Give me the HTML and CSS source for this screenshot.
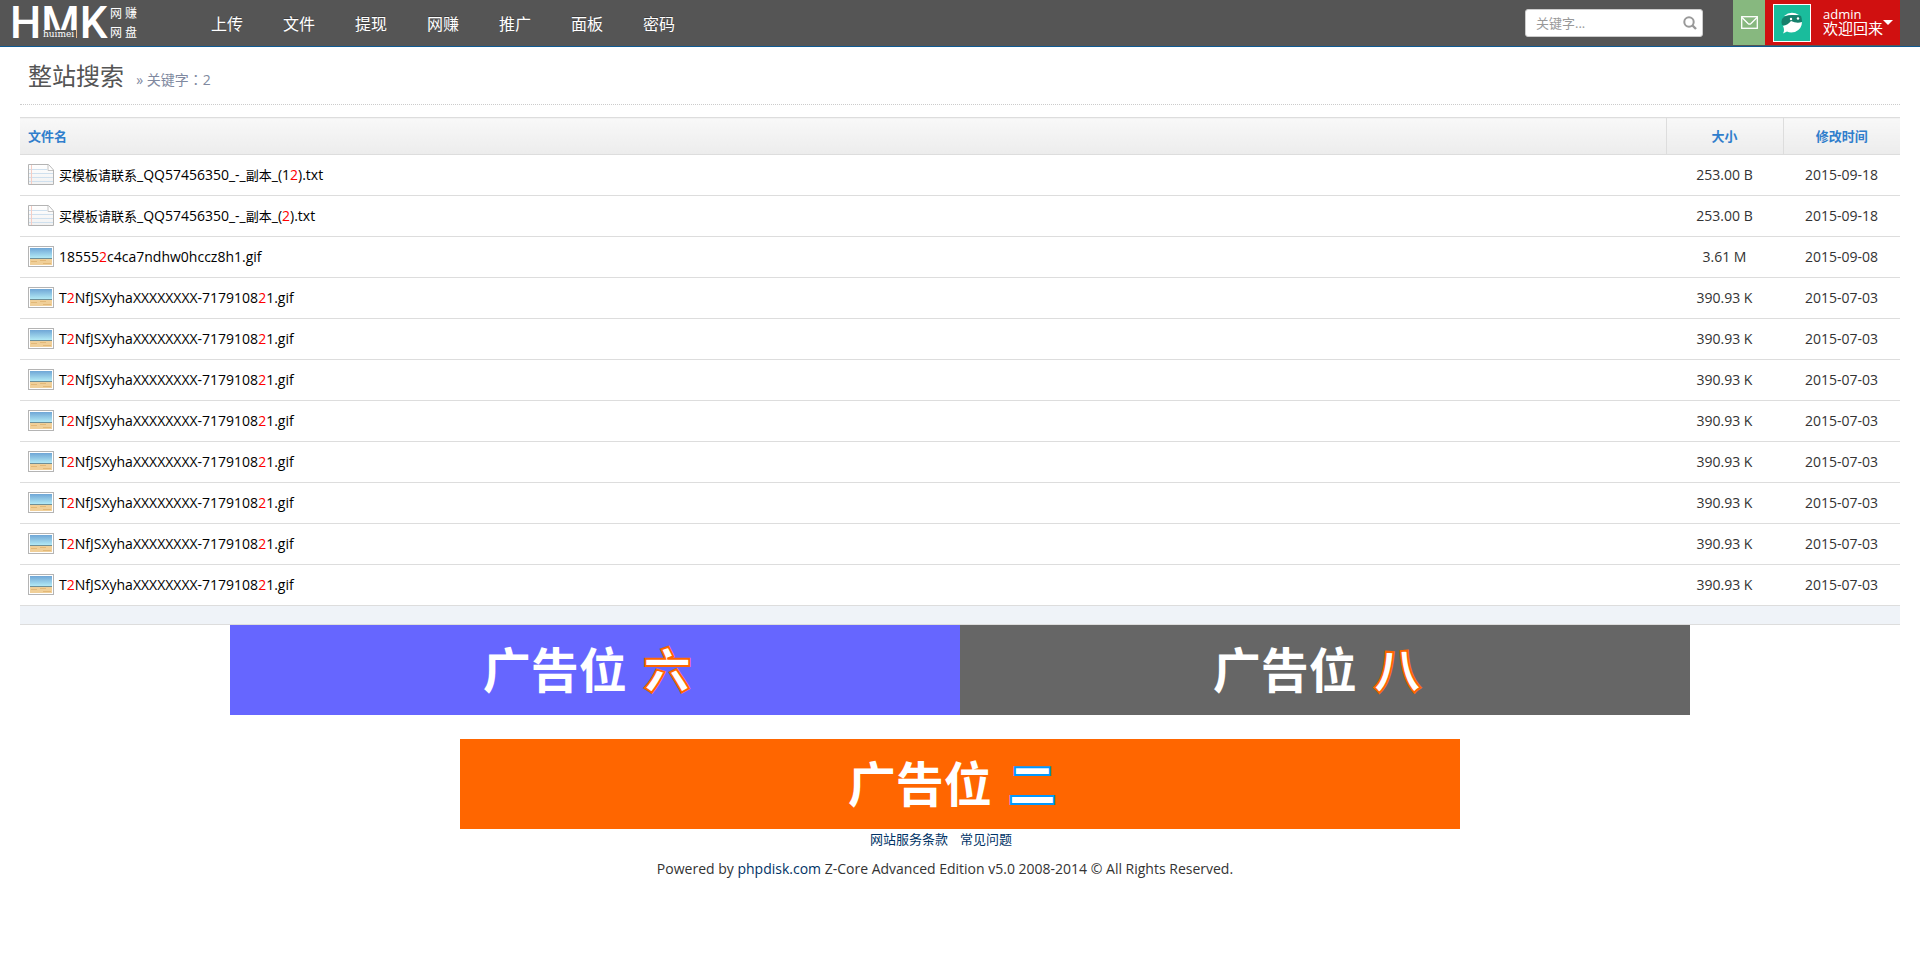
FILE: index.html
```html
<!DOCTYPE html>
<html lang="zh-CN">
    <head>
        <meta charset="UTF-8" />
        <meta name="viewport" content="width=device-width, initial-scale=1.0" />
        <title>整站搜索</title>
        <link rel="stylesheet" href="styles.css">
    </head>
    <body>
        <svg class="symbols" width="0" height="0" aria-hidden="true">
            <defs>
                <linearGradient id="sky" x1="0" y1="0" x2="0" y2="1">
                    <stop offset="0" stop-color="#6fa6d6" />
                    <stop offset="1" stop-color="#b9f0f8" />
                </linearGradient>
                <linearGradient id="paper" x1="0" y1="0" x2="0" y2="1">
                    <stop offset="0" stop-color="#fff" />
                    <stop offset="1" stop-color="#f1f1f1" />
                </linearGradient>
                <symbol id="icon-txt" viewBox="0 0 26 21">
                    <path d="M.5 .5H20.500L25.500 6V20.500H.5Z" fill="url(#paper)" stroke="#b4b4b4" />
                    <path d="M1 5.500H19M1 9.500H25M1 13.500H25M1 17.500H25" stroke="#cfe0ee" />
                    <path d="M3.500 1V20" stroke="#f5cdc4" />
                    <path d="M20 1V6.500H25" fill="#fff" stroke="#c4c4c4" />
                </symbol>
                <symbol id="icon-gif" viewBox="0 0 26 21">
                    <rect x=".5" y=".5" width="25" height="20" fill="#fff" stroke="#b4b4b4" />
                    <rect x="2" y="2" width="22" height="11" fill="url(#sky)" />
                    <rect x="2" y="12" width="22" height="1" fill="#6f8f96" />
                    <rect x="2" y="13" width="22" height="6" fill="#f0cf98" />
                    <path d="M3 15.500H9M12 14.500H18M15 17.500H23" stroke="#e2b878" />
                </symbol>
            </defs>
        </svg>

        <header class="header">
            <a class="logo" href="#">
                <span class="logo-main">HMK</span>
                <span class="logo-sub">huimei</span>
                <span class="logo-side"><span>网 赚</span><span>网 盘</span></span>
            </a>
            <nav class="nav">
                <a href="#">上传</a>
                <a href="#">文件</a>
                <a href="#">提现</a>
                <a href="#">网赚</a>
                <a href="#">推广</a>
                <a href="#">面板</a>
                <a href="#">密码</a>
            </nav>
            <form class="search">
                <input type="text" name="word" placeholder="关键字..." aria-label="关键字" />
                <button type="submit" aria-label="搜索">
                    <svg width="14" height="14" viewBox="0 0 14 14" fill="none" stroke="#999" stroke-width="2">
                        <circle cx="6" cy="6" r="4.700" />
                        <path d="M9.500 9.500L13 13" stroke-width="2.400" />
                    </svg>
                </button>
            </form>
            <a class="mail" href="#" aria-label="消息">
                <svg width="17" height="13" viewBox="0 0 17 13" fill="none" stroke="#fff" stroke-width="1.300">
                    <rect x=".7" y=".7" width="15.600" height="11.600" />
                    <path d="M1 1.500L7 7.500Q8.500 8.800 10 7.500L16 1.500" />
                </svg>
            </a>
            <a class="user" href="#">
                <svg class="avatar" width="38" height="38" viewBox="0 0 38 38">
                    <rect x=".5" y=".5" width="37" height="37" fill="#1abc9c" stroke="#fff" />
                    <path d="M11 12Q18 6 26 11Z" fill="#fff" />
                    <path d="M9 15Q12 11 19 11T28 12Q30 17 28 21L9 21Q8 17 9 15Z" fill="#16806c" />
                    <path d="M10 22Q15 21 18 17Q24 20 29 18Q29 25 22 28Q17 29 14 27.500L10 29.500Q12 26 10 22Z" fill="#fff" />
                    <circle cx="18" cy="15" r="1.200" fill="#fff" />
                    <circle cx="25" cy="14.500" r="1.200" fill="#fff" />
                </svg>
                <span class="user-text">
                    <span>admin</span>
                    <span class="welcome">欢迎回来</span>
                </span>
                <span class="caret"></span>
            </a>
        </header>

        <main class="main">
            <h1 class="title">整站搜索 <small lang="zh-TW">» 关键字：2</small></h1>

            <table class="files">
                <thead>
                    <tr>
                        <th class="name">文件名</th>
                        <th>大小</th>
                        <th>修改时间</th>
                    </tr>
                </thead>
                <tbody>
                    <tr>
                        <td class="name"><a href="#"><svg><use href="#icon-txt" /></svg><span><i>买模板请联系</i>_QQ57456350_-_<i>副本</i>_(1<em>2</em>).txt</span></a></td>
                        <td>253.00 B</td>
                        <td>2015-09-18</td>
                    </tr>
                    <tr>
                        <td class="name"><a href="#"><svg><use href="#icon-txt" /></svg><span><i>买模板请联系</i>_QQ57456350_-_<i>副本</i>_(<em>2</em>).txt</span></a></td>
                        <td>253.00 B</td>
                        <td>2015-09-18</td>
                    </tr>
                    <tr>
                        <td class="name"><a href="#"><svg><use href="#icon-gif" /></svg><span>18555<em>2</em>c4ca7ndhw0hccz8h1.gif</span></a></td>
                        <td>3.61 M</td>
                        <td>2015-09-08</td>
                    </tr>
                    <tr>
                        <td class="name"><a href="#"><svg><use href="#icon-gif" /></svg><span>T<em>2</em>NfJSXyhaXXXXXXXX-7179108<em>2</em>1.gif</span></a></td>
                        <td>390.93 K</td>
                        <td>2015-07-03</td>
                    </tr>
                    <tr>
                        <td class="name"><a href="#"><svg><use href="#icon-gif" /></svg><span>T<em>2</em>NfJSXyhaXXXXXXXX-7179108<em>2</em>1.gif</span></a></td>
                        <td>390.93 K</td>
                        <td>2015-07-03</td>
                    </tr>
                    <tr>
                        <td class="name"><a href="#"><svg><use href="#icon-gif" /></svg><span>T<em>2</em>NfJSXyhaXXXXXXXX-7179108<em>2</em>1.gif</span></a></td>
                        <td>390.93 K</td>
                        <td>2015-07-03</td>
                    </tr>
                    <tr>
                        <td class="name"><a href="#"><svg><use href="#icon-gif" /></svg><span>T<em>2</em>NfJSXyhaXXXXXXXX-7179108<em>2</em>1.gif</span></a></td>
                        <td>390.93 K</td>
                        <td>2015-07-03</td>
                    </tr>
                    <tr>
                        <td class="name"><a href="#"><svg><use href="#icon-gif" /></svg><span>T<em>2</em>NfJSXyhaXXXXXXXX-7179108<em>2</em>1.gif</span></a></td>
                        <td>390.93 K</td>
                        <td>2015-07-03</td>
                    </tr>
                    <tr>
                        <td class="name"><a href="#"><svg><use href="#icon-gif" /></svg><span>T<em>2</em>NfJSXyhaXXXXXXXX-7179108<em>2</em>1.gif</span></a></td>
                        <td>390.93 K</td>
                        <td>2015-07-03</td>
                    </tr>
                    <tr>
                        <td class="name"><a href="#"><svg><use href="#icon-gif" /></svg><span>T<em>2</em>NfJSXyhaXXXXXXXX-7179108<em>2</em>1.gif</span></a></td>
                        <td>390.93 K</td>
                        <td>2015-07-03</td>
                    </tr>
                    <tr>
                        <td class="name"><a href="#"><svg><use href="#icon-gif" /></svg><span>T<em>2</em>NfJSXyhaXXXXXXXX-7179108<em>2</em>1.gif</span></a></td>
                        <td>390.93 K</td>
                        <td>2015-07-03</td>
                    </tr>
                </tbody>
            </table>
            <div class="pager"></div>
        </main>

        <div class="ads">
            <div class="ad ad-blue">广告位 <b>六</b></div>
            <div class="ad ad-gray">广告位 <b>八</b></div>
        </div>
        <div class="ads ads-single">
            <div class="ad ad-orange">广告位 <b>二</b></div>
        </div>

        <footer class="footer">
            <div class="links">
                <a href="#">网站服务条款</a>
                <a href="#">常见问题</a>
            </div>
            <p>Powered by <a href="#">phpdisk.com</a> Z-Core Advanced Edition v5.0 2008-2014 © All Rights Reserved.</p>
        </footer>
    </body>
</html>
```
FILE: styles.css
```css
* {
    box-sizing: border-box;
}
body {
    margin: 0;
    background: #fff;
    color: #333;
    font-family: 'Open Sans', 'Noto Sans CJK SC', sans-serif;
    font-size: 14px;
    line-height: 20px;
}
a {
    color: inherit;
    text-decoration: none;
}
.symbols {
    position: absolute;
}

/* header */
.header {
    display: flex;
    height: 47px;
    padding-right: 20px;
    background: #555;
    border-bottom: 1px solid #0f5a93;
    color: #fff;
}
.logo {
    position: relative;
    display: flex;
    width: 191px;
    padding-left: 10px;
}
.logo-main {
    width: 100px;
    font: 500 44px/46px Roboto, sans-serif;
}
.logo-sub {
    position: absolute;
    left: 43px;
    top: 30px;
    padding-right: 2px;
    background: #555;
    font: 9px/9px 'DejaVu Serif', serif;
}
.logo-side {
    display: flex;
    flex-direction: column;
    padding-top: 4px;
    font-size: 12px;
    line-height: 19px;
}
.nav {
    display: flex;
}
.nav a {
    padding: 0 20px;
    font-size: 16px;
    line-height: 48px;
    text-shadow: 0 -1px 0 rgba(0, 0, 0, 0.25);
}
.search {
    display: flex;
    align-items: center;
    width: 178px;
    height: 28px;
    margin: 9px 30px 0 auto;
    padding: 0 5px 0 10px;
    background: #fff;
    border: 1px solid #ccc;
    border-radius: 3px;
}
.search input {
    flex: 1;
    min-width: 0;
    padding: 0;
    border: none;
    outline: none;
    font-family: inherit;
    font-size: 13px;
}
.search input::placeholder {
    color: #999;
}
.search button {
    display: flex;
    padding: 0;
    border: none;
    background: none;
    cursor: pointer;
}
.mail {
    display: flex;
    align-items: center;
    justify-content: center;
    width: 32px;
    height: 45px;
    background: #87b87f;
}
.user {
    display: flex;
    align-items: center;
    width: 135px;
    height: 45px;
    padding-left: 8px;
    background: #d01010;
}
.user-text {
    display: flex;
    flex-direction: column;
    margin-left: 12px;
    padding-bottom: 4px;
    font-size: 13px;
    line-height: 14px;
}
.welcome {
    font-size: 15px;
}
.caret {
    border: 5px solid transparent;
    border-top-color: #fff;
    border-bottom: none;
}

/* file list */
.main {
    padding: 0 20px;
}
.title {
    margin: 0 0 12px;
    padding: 12px 8px 11px;
    border-bottom: 1px dotted #ccc;
    color: #555;
    font-size: 24px;
    font-weight: 400;
    line-height: 34px;
}
.title small {
    margin-left: 6px;
    color: #8089a0;
    font-family: 'Open Sans', 'Noto Sans CJK TC', sans-serif;
    font-size: 14px;
    line-height: 14px;
}
.files {
    width: 100%;
    table-layout: fixed;
    border-collapse: collapse;
}
.files th {
    width: 117px;
    height: 37px;
    padding: 0;
    background: linear-gradient(#f8f8f8, #ececec);
    border: 1px solid #ddd;
    border-right: none;
    color: #307ecc;
    font-size: 13px;
}
.files td {
    height: 41px;
    padding: 0 0 1px;
    border-bottom: 1px solid #ddd;
    text-align: center;
}
.files .name {
    width: auto;
    padding-left: 8px;
    border-left: none;
    text-align: left;
}
.name a {
    display: flex;
    align-items: center;
    color: #000;
}
.name svg {
    width: 26px;
    height: 21px;
    margin-right: 5px;
}
.name i {
    font-size: 13px;
    font-style: normal;
}
.name em {
    color: #f00;
    font-style: normal;
}
.pager {
    height: 19px;
    background: #eff3f8;
    border-bottom: 1px solid #ddd;
}

/* ads */
.ads {
    display: flex;
    justify-content: center;
}
.ads-single {
    margin-top: 24px;
}
.ad {
    width: 730px;
    height: 90px;
    padding-right: 16px;
    color: #fff;
    font-size: 48px;
    font-weight: 700;
    line-height: 90px;
    text-align: center;
}
.ad b {
    margin-left: 4px;
    -webkit-text-stroke: 2px #f60;
}
.ad-blue {
    background: #66f;
}
.ad-gray {
    background: #666;
}
.ad-orange {
    width: 1000px;
    background: #f60;
}
.ad-orange b {
    -webkit-text-stroke-color: #09f;
}

/* footer */
.footer {
    padding-right: 30px;
    text-align: center;
}
.footer a {
    color: #036;
}
.links {
    display: flex;
    justify-content: center;
    gap: 12px;
    padding-right: 8px;
    font-size: 13px;
}
.footer p {
    margin: 10px 0 0;
}
```
